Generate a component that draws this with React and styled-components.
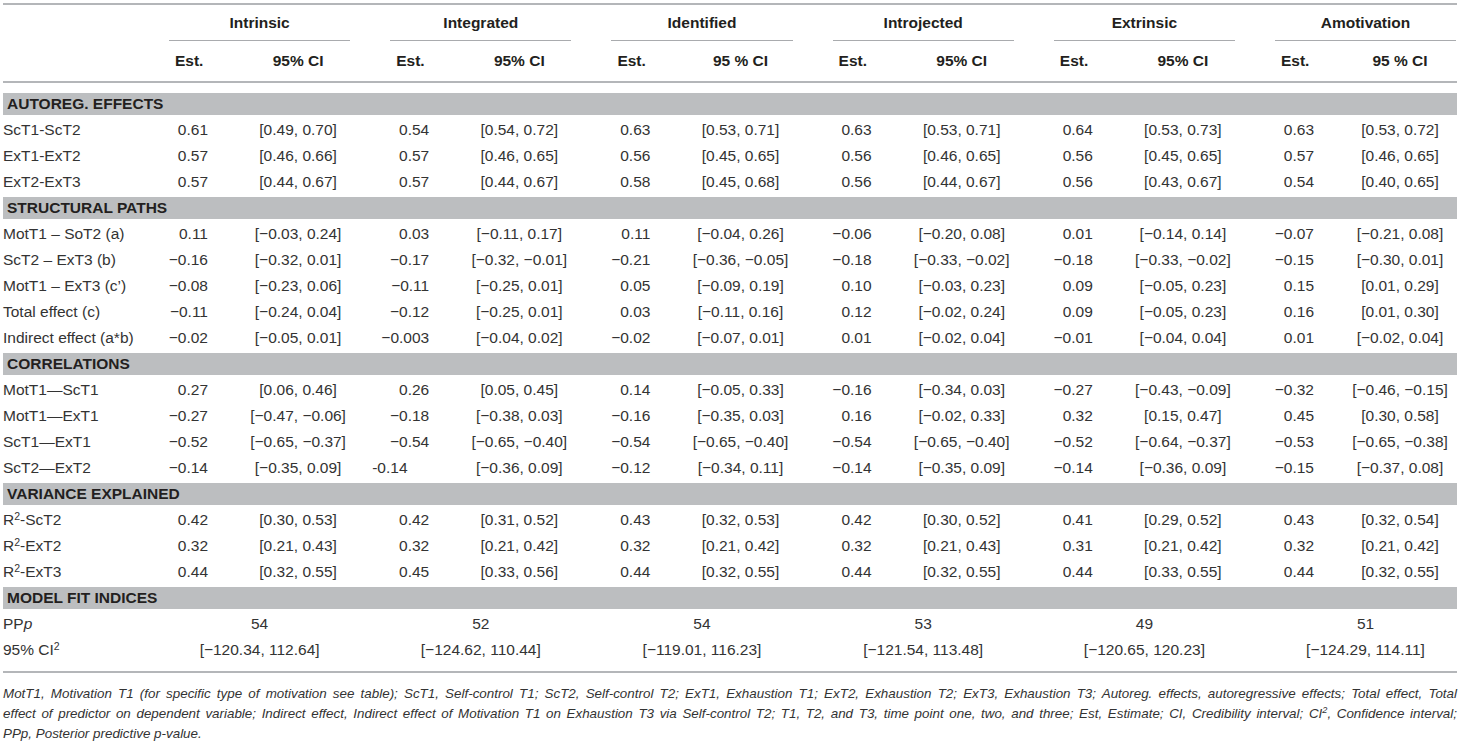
import React from "react";
import styled, { createGlobalStyle } from "styled-components";

const GlobalStyle = createGlobalStyle`
  body {
    margin: 0;
    background: #fff;
    font-family: "Liberation Sans", Arial, sans-serif;
    color: #333;
  }
`;

const Page = styled.div`
  width: 1454px;
  padding: 3px 4px 0 3px;
`;

const TableWrap = styled.div`
  border-top: 2px solid #b4b6b9;
  border-bottom: 2px solid #b4b6b9;
  padding-bottom: 8px;
`;

const Table = styled.table`
  width: 1454px;
  table-layout: fixed;
  border-collapse: separate;
  border-spacing: 0;
  font-size: 15.5px;
`;

const Sup = styled.sup`
  font-size: 0.68em;
  line-height: 0;
  vertical-align: 0.5em;
`;

const GroupHead = styled.th`
  height: 36px;
  padding: 0;
  vertical-align: bottom;
`;

const GroupLabel = styled.div`
  margin: ${(p) => (p.$last ? "0 1px 0 31px" : "0 9px 0 31px")};
  border-bottom: 1px solid #a9abae;
  line-height: 35px;
  text-align: center;
  font-weight: bold;
  color: #231f20;
`;

const SubHead = styled.th`
  height: 40px;
  padding: ${(p) => (p.$est ? "0 0 0 37px" : "0 0 0 29px")};
  text-align: ${(p) => (p.$est ? "left" : "center")};
  font-weight: bold;
  color: #231f20;
  border-bottom: 2px solid #b4b6b9;
  white-space: nowrap;
`;

const BandCell = styled.td`
  background: #bcbec0;
  border-top: ${(p) => (p.$first ? "10px" : "2px")} solid #fff;
  border-bottom: 2px solid #fff;
  padding: 0 4px;
  line-height: 22px;
  font-weight: bold;
  color: #231f20;
`;

const LabelCell = styled.td`
  padding: 0;
  line-height: 26px;
  white-space: nowrap;
`;

const EstCell = styled.td`
  padding: ${(p) => (p.$loose ? "0 0 0 13px" : "0")};
  text-align: ${(p) => (p.$loose ? "left" : "right")};
  line-height: 26px;
  white-space: nowrap;
`;

const CiCell = styled.td`
  padding: 0 0 0 29px;
  text-align: center;
  line-height: 26px;
  white-space: nowrap;
`;

const FitCell = styled.td`
  padding: ${(p) => (p.$last ? "0 1px 0 31px" : "0 9px 0 31px")};
  text-align: center;
  line-height: 26px;
  white-space: nowrap;
`;

const Note = styled.div`
  margin-top: 11px;
  font-style: italic;
  font-size: 13.4px;
  line-height: 20px;
  color: #333;
`;

const NoteLine = styled.div`
  white-space: nowrap;
  text-align: ${(p) => (p.$justify ? "justify" : "left")};
  text-align-last: ${(p) => (p.$justify ? "justify" : "left")};
`;

const groups = [
  { name: "Intrinsic", ci: "95% CI" },
  { name: "Integrated", ci: "95% CI" },
  { name: "Identified", ci: "95 % CI" },
  { name: "Introjected", ci: "95% CI" },
  { name: "Extrinsic", ci: "95% CI" },
  { name: "Amotivation", ci: "95 % CI" },
];

const R2 = ({ name }) => (
  <>
    R<Sup>2</Sup>-{name}
  </>
);

const sections = [
  {
    title: "AUTOREG. EFFECTS",
    rows: [
      { label: "ScT1-ScT2", values: [["0.61", "[0.49, 0.70]"], ["0.54", "[0.54, 0.72]"], ["0.63", "[0.53, 0.71]"], ["0.63", "[0.53, 0.71]"], ["0.64", "[0.53, 0.73]"], ["0.63", "[0.53, 0.72]"]] },
      { label: "ExT1-ExT2", values: [["0.57", "[0.46, 0.66]"], ["0.57", "[0.46, 0.65]"], ["0.56", "[0.45, 0.65]"], ["0.56", "[0.46, 0.65]"], ["0.56", "[0.45, 0.65]"], ["0.57", "[0.46, 0.65]"]] },
      { label: "ExT2-ExT3", values: [["0.57", "[0.44, 0.67]"], ["0.57", "[0.44, 0.67]"], ["0.58", "[0.45, 0.68]"], ["0.56", "[0.44, 0.67]"], ["0.56", "[0.43, 0.67]"], ["0.54", "[0.40, 0.65]"]] },
    ],
  },
  {
    title: "STRUCTURAL PATHS",
    rows: [
      { label: "MotT1 – SoT2 (a)", values: [["0.11", "[−0.03, 0.24]"], ["0.03", "[−0.11, 0.17]"], ["0.11", "[−0.04, 0.26]"], ["−0.06", "[−0.20, 0.08]"], ["0.01", "[−0.14, 0.14]"], ["−0.07", "[−0.21, 0.08]"]] },
      { label: "ScT2 – ExT3 (b)", values: [["−0.16", "[−0.32, 0.01]"], ["−0.17", "[−0.32, −0.01]"], ["−0.21", "[−0.36, −0.05]"], ["−0.18", "[−0.33, −0.02]"], ["−0.18", "[−0.33, −0.02]"], ["−0.15", "[−0.30, 0.01]"]] },
      { label: "MotT1 – ExT3 (c’)", values: [["−0.08", "[−0.23, 0.06]"], ["−0.11", "[−0.25, 0.01]"], ["0.05", "[−0.09, 0.19]"], ["0.10", "[−0.03, 0.23]"], ["0.09", "[−0.05, 0.23]"], ["0.15", "[0.01, 0.29]"]] },
      { label: "Total effect (c)", values: [["−0.11", "[−0.24, 0.04]"], ["−0.12", "[−0.25, 0.01]"], ["0.03", "[−0.11, 0.16]"], ["0.12", "[−0.02, 0.24]"], ["0.09", "[−0.05, 0.23]"], ["0.16", "[0.01, 0.30]"]] },
      { label: "Indirect effect (a*b)", values: [["−0.02", "[−0.05, 0.01]"], ["−0.003", "[−0.04, 0.02]"], ["−0.02", "[−0.07, 0.01]"], ["0.01", "[−0.02, 0.04]"], ["−0.01", "[−0.04, 0.04]"], ["0.01", "[−0.02, 0.04]"]] },
    ],
  },
  {
    title: "CORRELATIONS",
    rows: [
      { label: "MotT1—ScT1", values: [["0.27", "[0.06, 0.46]"], ["0.26", "[0.05, 0.45]"], ["0.14", "[−0.05, 0.33]"], ["−0.16", "[−0.34, 0.03]"], ["−0.27", "[−0.43, −0.09]"], ["−0.32", "[−0.46, −0.15]"]] },
      { label: "MotT1—ExT1", values: [["−0.27", "[−0.47, −0.06]"], ["−0.18", "[−0.38, 0.03]"], ["−0.16", "[−0.35, 0.03]"], ["0.16", "[−0.02, 0.33]"], ["0.32", "[0.15, 0.47]"], ["0.45", "[0.30, 0.58]"]] },
      { label: "ScT1—ExT1", values: [["−0.52", "[−0.65, −0.37]"], ["−0.54", "[−0.65, −0.40]"], ["−0.54", "[−0.65, −0.40]"], ["−0.54", "[−0.65, −0.40]"], ["−0.52", "[−0.64, −0.37]"], ["−0.53", "[−0.65, −0.38]"]] },
      { label: "ScT2—ExT2", values: [["−0.14", "[−0.35, 0.09]"], ["-0.14", "[−0.36, 0.09]", true], ["−0.12", "[−0.34, 0.11]"], ["−0.14", "[−0.35, 0.09]"], ["−0.14", "[−0.36, 0.09]"], ["−0.15", "[−0.37, 0.08]"]] },
    ],
  },
  {
    title: "VARIANCE EXPLAINED",
    rows: [
      { label: <R2 name="ScT2" />, values: [["0.42", "[0.30, 0.53]"], ["0.42", "[0.31, 0.52]"], ["0.43", "[0.32, 0.53]"], ["0.42", "[0.30, 0.52]"], ["0.41", "[0.29, 0.52]"], ["0.43", "[0.32, 0.54]"]] },
      { label: <R2 name="ExT2" />, values: [["0.32", "[0.21, 0.43]"], ["0.32", "[0.21, 0.42]"], ["0.32", "[0.21, 0.42]"], ["0.32", "[0.21, 0.43]"], ["0.31", "[0.21, 0.42]"], ["0.32", "[0.21, 0.42]"]] },
      { label: <R2 name="ExT3" />, values: [["0.44", "[0.32, 0.55]"], ["0.45", "[0.33, 0.56]"], ["0.44", "[0.32, 0.55]"], ["0.44", "[0.32, 0.55]"], ["0.44", "[0.33, 0.55]"], ["0.44", "[0.32, 0.55]"]] },
    ],
  },
];

const fitRows = [
  {
    label: (
      <>
        PP<i>p</i>
      </>
    ),
    values: ["54", "52", "54", "53", "49", "51"],
  },
  {
    label: (
      <>
        95% CI<Sup>2</Sup>
      </>
    ),
    values: [
      "[−120.34, 112.64]",
      "[−124.62, 110.44]",
      "[−119.01, 116.23]",
      "[−121.54, 113.48]",
      "[−120.65, 120.23]",
      "[−124.29, 114.11]",
    ],
  },
];

const App = () => {
  return (
    <Page>
      <GlobalStyle />
      <TableWrap>
        <Table>
          <colgroup>
            <col style={{ width: 135 }} />
            {groups.map((g, i) => (
              <React.Fragment key={g.name}>
                <col style={{ width: 70 }} />
                <col style={{ width: i === groups.length - 1 ? 143 : 151.2 }} />
              </React.Fragment>
            ))}
          </colgroup>
          <thead>
            <tr>
              <GroupHead />
              {groups.map((g, i) => (
                <GroupHead key={g.name} colSpan={2}>
                  <GroupLabel $last={i === groups.length - 1}>{g.name}</GroupLabel>
                </GroupHead>
              ))}
            </tr>
            <tr>
              <SubHead />
              {groups.map((g) => (
                <React.Fragment key={g.name}>
                  <SubHead $est>Est.</SubHead>
                  <SubHead>{g.ci}</SubHead>
                </React.Fragment>
              ))}
            </tr>
          </thead>
          <tbody>
            {sections.map((s, si) => (
              <React.Fragment key={s.title}>
                <tr>
                  <BandCell colSpan={13} $first={si === 0}>
                    {s.title}
                  </BandCell>
                </tr>
                {s.rows.map((r, ri) => (
                  <tr key={ri}>
                    <LabelCell>{r.label}</LabelCell>
                    {r.values.map(([est, ci, loose], vi) => (
                      <React.Fragment key={vi}>
                        <EstCell $loose={loose}>{est}</EstCell>
                        <CiCell>{ci}</CiCell>
                      </React.Fragment>
                    ))}
                  </tr>
                ))}
              </React.Fragment>
            ))}
            <tr>
              <BandCell colSpan={13}>MODEL FIT INDICES</BandCell>
            </tr>
            {fitRows.map((r, ri) => (
              <tr key={ri}>
                <LabelCell>{r.label}</LabelCell>
                {r.values.map((v, vi) => (
                  <FitCell key={vi} colSpan={2} $last={vi === r.values.length - 1}>
                    {v}
                  </FitCell>
                ))}
              </tr>
            ))}
          </tbody>
        </Table>
      </TableWrap>
      <Note>
        <NoteLine $justify>
          MotT1, Motivation T1 (for specific type of motivation see table); ScT1, Self-control T1; ScT2,
          Self-control T2; ExT1, Exhaustion T1; ExT2, Exhaustion T2; ExT3, Exhaustion T3; Autoreg.
          effects, autoregressive effects; Total effect, Total
        </NoteLine>
        <NoteLine $justify>
          effect of predictor on dependent variable; Indirect effect, Indirect effect of Motivation T1 on
          Exhaustion T3 via Self-control T2; T1, T2, and T3, time point one, two, and three; Est,
          Estimate; CI, Credibility interval; CI<Sup>2</Sup>, Confidence interval;
        </NoteLine>
        <NoteLine>PPp, Posterior predictive p-value.</NoteLine>
      </Note>
    </Page>
  );
};

export default App;
